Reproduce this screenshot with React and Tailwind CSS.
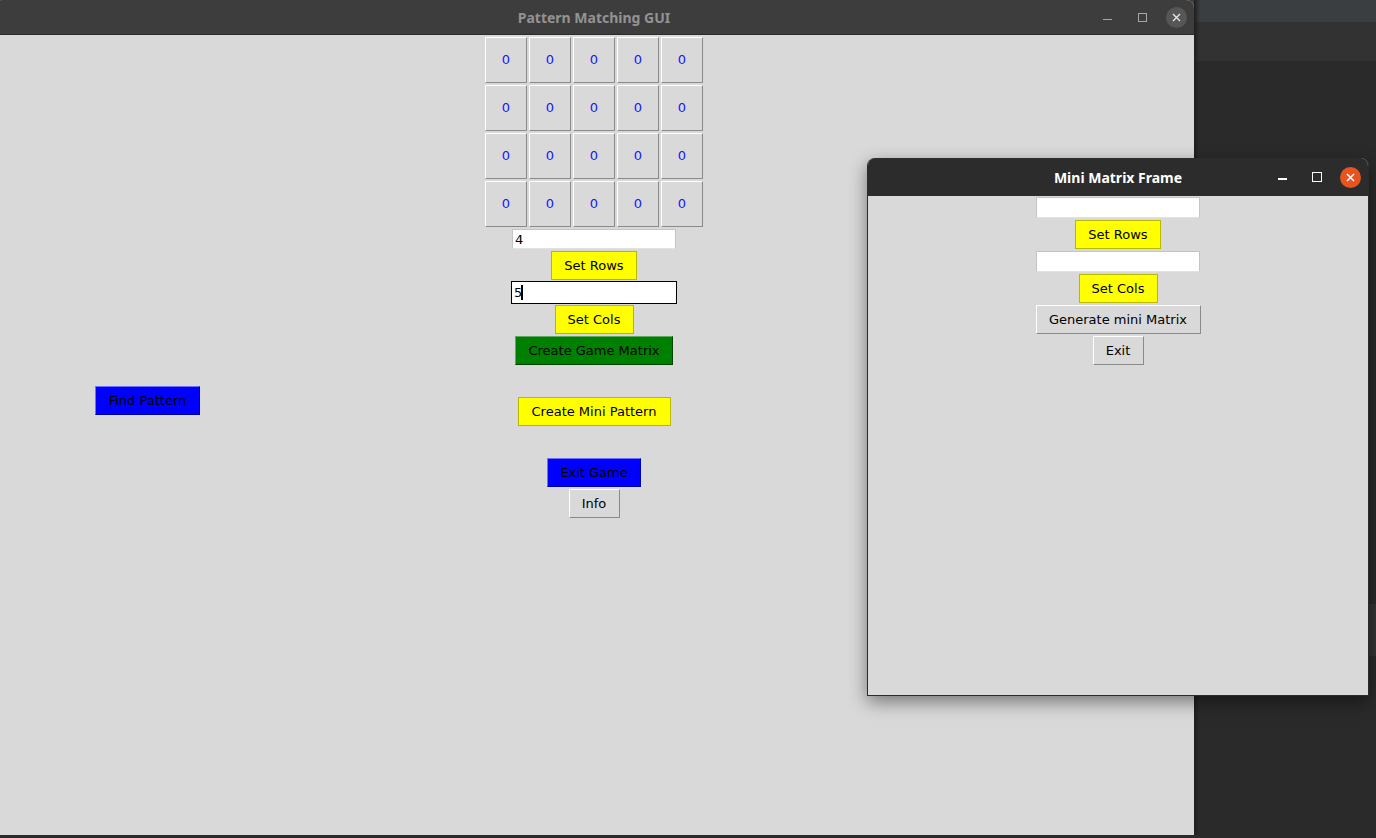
import React from 'react';

const tk = "font-['DejaVu_Sans',sans-serif] text-[13px] text-black";

const btnStyles = {
  yellow: 'bg-[#ffff00] border border-[#b8b800]',
  green: 'bg-[#008000] border border-t-[#5fa85f] border-l-[#5fa85f] border-r-[#004400] border-b-[#004400]',
  blue: 'bg-[#0000ff] border border-t-[#7070ff] border-l-[#7070ff] border-r-[#0000a8] border-b-[#0000a8]',
  gray: 'bg-[#d9d9d9] border border-t-white border-l-white border-r-[#8a8a8a] border-b-[#8a8a8a]',
};

const TkButton = ({ color = 'gray', className = '', children }) => (
  <div className={`flex h-[29px] items-center justify-center ${btnStyles[color]} ${tk} ${className}`}>
    {children}
  </div>
);

const Entry = ({ value, focused, className = '' }) => (
  <div
    className={`flex items-center bg-white pl-[2px] ${tk} ${
      focused ? 'border border-black' : 'border border-[#c4c4c4] border-b-[#e2e2e2]'
    } ${className}`}
  >
    {value && <span className="leading-none">{value}</span>}
    {focused && <span className="ml-[-1px] h-[15px] w-[2px] bg-black" />}
  </div>
);

const MainWindow = () => {
  const rows = 4;
  const cols = 5;
  return (
    <div className="absolute left-[-6px] top-0 flex h-[835px] w-[1200px] flex-col overflow-hidden rounded-t-[8px] bg-[#d9d9d9]">
      <div className="relative flex h-[35px] shrink-0 items-center justify-center border-b border-[#2b2b2b] bg-[#3d3d3d]">
        <span className="font-['Noto_Sans',sans-serif] text-[14px] font-bold text-[#939393]">Pattern Matching GUI</span>
        <div className="absolute right-[7px] top-0 flex h-[34px] items-center">
          <span className="mt-[5px] h-[1px] w-[9px] bg-[#a8a8a8]" />
          <span className="ml-[26px] h-[9px] w-[9px] border border-[#a8a8a8]" />
          <span className="ml-[19px] flex h-[21px] w-[21px] items-center justify-center rounded-full bg-[#565656]">
            <svg width="9" height="9" viewBox="0 0 9 9">
              <path d="M1 1L8 8M8 1L1 8" stroke="#e8e8e8" strokeWidth="1.4" />
            </svg>
          </span>
        </div>
      </div>

      <div className="flex flex-col items-center">
        <div className="mt-[2px] grid grid-cols-5 gap-[2px]">
          {Array.from({ length: rows * cols }).map((_, i) => (
            <div
              key={i}
              className="flex h-[46px] w-[42px] items-center justify-center border border-t-white border-l-white border-r-[#8a8a8a] border-b-[#8a8a8a] bg-[#d9d9d9] font-['DejaVu_Sans',sans-serif] text-[13px] text-[#1414ff]"
            >
              0
            </div>
          ))}
        </div>

        <Entry value="4" className="mt-[2px] h-[20px] w-[164px]" />
        <TkButton color="yellow" className="mt-[2px] w-[86px]">Set Rows</TkButton>
        <Entry value="5" focused className="mt-[1px] h-[23px] w-[166px]" />
        <TkButton color="yellow" className="mt-[1px] w-[79px]">Set Cols</TkButton>
        <TkButton color="green" className="mt-[2px] w-[158px]">Create Game Matrix</TkButton>

        <div className="grid w-full grid-cols-[1fr_auto_1fr]">
          <div className="pl-[101px] pt-[21px]">
            <TkButton color="blue" className="w-[105px]">Find Pattern</TkButton>
          </div>
          <div className="pt-[32px]">
            <TkButton color="yellow" className="w-[153px]">Create Mini Pattern</TkButton>
          </div>
          <div />
        </div>

        <TkButton color="blue" className="mt-[32px] w-[94px]">Exit Game</TkButton>
        <TkButton color="gray" className="mt-[2px] w-[51px]">Info</TkButton>
      </div>
    </div>
  );
};

const MiniWindow = () => (
  <div className="absolute left-[867px] top-[158px] flex h-[538px] w-[502px] flex-col overflow-hidden rounded-t-[8px] border border-t-0 border-[#2b2b2b] bg-[#d9d9d9] shadow-[0_6px_18px_rgba(0,0,0,0.45)]">
    <div className="relative flex h-[38px] shrink-0 items-center justify-center bg-[#2c2c2c]">
      <span className="font-['Noto_Sans',sans-serif] text-[14px] font-bold text-white">Mini Matrix Frame</span>
      <div className="absolute right-[7px] top-0 flex h-[38px] items-center">
        <span className="mt-[4px] h-[1.5px] w-[9px] bg-white" />
        <span className="ml-[25px] h-[10px] w-[10px] border-[1.5px] border-white" />
        <span className="ml-[18px] flex h-[21px] w-[21px] items-center justify-center rounded-full bg-[#e8531f]">
          <svg width="9" height="9" viewBox="0 0 9 9">
            <path d="M1 1L8 8M8 1L1 8" stroke="#ffffff" strokeWidth="1.5" />
          </svg>
        </span>
      </div>
    </div>
    <div className="flex flex-col items-center">
      <Entry className="mt-[1px] h-[21px] w-[164px]" />
      <TkButton color="yellow" className="mt-[2px] w-[86px]">Set Rows</TkButton>
      <Entry className="mt-[2px] h-[21px] w-[164px]" />
      <TkButton color="yellow" className="mt-[2px] w-[79px]">Set Cols</TkButton>
      <TkButton color="gray" className="mt-[2px] w-[165px]">Generate mini Matrix</TkButton>
      <TkButton color="gray" className="mt-[2px] w-[51px]">Exit</TkButton>
    </div>
  </div>
);

export default function App() {
  return (
    <div className="relative h-[838px] w-[1376px] overflow-hidden bg-[#2a2a2a]">
      {/* desktop / window behind */}
      <div className="flex h-full flex-col">
        <div className="h-[22px] bg-[#3b3e41]" />
        <div className="h-[39px] bg-[#323232]" />
        <div className="relative flex-1 bg-[#2a2a2a]">
          <div className="absolute right-0 top-[543px] h-[52px] w-[8px] bg-[#313436]" />
        </div>
      </div>
      <div className="absolute left-[1194px] top-0 h-[835px] w-[6px] bg-gradient-to-r from-[#1e1e1e] to-transparent" />
      <MainWindow />
      <MiniWindow />
    </div>
  );
}
